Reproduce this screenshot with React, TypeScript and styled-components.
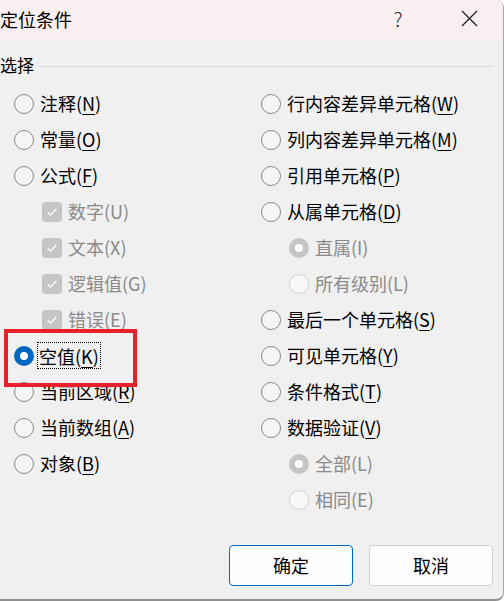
import React from 'react';
import styled, { createGlobalStyle, css } from 'styled-components';

const GlobalStyle = createGlobalStyle`
  html, body {
    margin: 0;
    padding: 0;
    background: #ffffff;
  }
  body {
    font-family: "Noto Sans CJK SC", "Noto Sans", sans-serif;
    color: #000;
  }
`;

const FONT = `"Noto Sans CJK SC", "Noto Sans", sans-serif`;

type Opt = {
  label: string;
  key?: string;
  kind: 'radio' | 'check';
  sub?: boolean;
  disabled?: boolean;
  checked?: boolean;
  focused?: boolean;
};

const leftItems: Opt[] = [
  { label: '注释', key: 'N', kind: 'radio' },
  { label: '常量', key: 'O', kind: 'radio' },
  { label: '公式', key: 'F', kind: 'radio' },
  { label: '数字(U)', kind: 'check', sub: true, disabled: true, checked: true },
  { label: '文本(X)', kind: 'check', sub: true, disabled: true, checked: true },
  { label: '逻辑值(G)', kind: 'check', sub: true, disabled: true, checked: true },
  { label: '错误(E)', kind: 'check', sub: true, disabled: true, checked: true },
  { label: '空值', key: 'K', kind: 'radio', checked: true, focused: true },
  { label: '当前区域', key: 'R', kind: 'radio' },
  { label: '当前数组', key: 'A', kind: 'radio' },
  { label: '对象', key: 'B', kind: 'radio' },
];

const rightItems: Opt[] = [
  { label: '行内容差异单元格', key: 'W', kind: 'radio' },
  { label: '列内容差异单元格', key: 'M', kind: 'radio' },
  { label: '引用单元格', key: 'P', kind: 'radio' },
  { label: '从属单元格', key: 'D', kind: 'radio' },
  { label: '直属(I)', kind: 'radio', sub: true, disabled: true, checked: true },
  { label: '所有级别(L)', kind: 'radio', sub: true, disabled: true },
  { label: '最后一个单元格', key: 'S', kind: 'radio' },
  { label: '可见单元格', key: 'Y', kind: 'radio' },
  { label: '条件格式', key: 'T', kind: 'radio' },
  { label: '数据验证', key: 'V', kind: 'radio' },
  { label: '全部(L)', kind: 'radio', sub: true, disabled: true, checked: true },
  { label: '相同(E)', kind: 'radio', sub: true, disabled: true },
];

const Window = styled.div`
  position: relative;
  width: 503px;
  height: 599px;
  background: #f0f0f0;
  border-right: 1px solid #a6a6a6;
  border-bottom: 2px solid #8e8e8e;
  border-radius: 0 8px 8px 0;
  overflow: hidden;
  display: flex;
  flex-direction: column;
  font-family: ${FONT};
`;

const TitleBar = styled.div`
  height: 41px;
  flex: none;
  background: #f9eff0;
  display: flex;
  align-items: center;
`;

const Title = styled.div`
  font-size: 18px;
  line-height: 24px;
  margin-top: -4px;
  flex: 1;
`;

const HelpMark = styled.div`
  font-size: 20px;
  line-height: 24px;
  font-weight: 300;
  margin-top: -4px;
  color: #222;
  width: 20px;
  text-align: center;
  margin-right: 52px;
`;

const CloseBtn = styled.div`
  width: 18px;
  height: 18px;
  margin-right: 25px;
  margin-top: -5px;
  display: flex;
  align-items: center;
  justify-content: center;
`;

const GroupHead = styled.div`
  margin-top: 13px;
  margin-bottom: 8px;
  height: 24px;
  display: flex;
  align-items: center;
  gap: 5px;
  padding-right: 10px;
`;

const GroupTitle = styled.span`
  font-size: 17px;
  line-height: 24px;
  margin-top: -2px;
`;

const GroupLine = styled.div`
  flex: 1;
  height: 1px;
  background: #d9d9d9;
`;

const Columns = styled.div`
  display: grid;
  grid-template-columns: 247px 1fr;
  padding-left: 14px;
`;

const Column = styled.div`
  display: flex;
  flex-direction: column;
`;

const Row = styled.div<{ $sub?: boolean }>`
  height: 36px;
  display: flex;
  align-items: center;
  gap: 6px;
  padding-left: ${(p) => (p.$sub ? 28 : 0)}px;
`;

const RadioDot = styled.span<{ $checked?: boolean; $disabled?: boolean }>`
  width: 20px;
  height: 20px;
  box-sizing: border-box;
  border-radius: 50%;
  flex: none;
  display: flex;
  align-items: center;
  justify-content: center;
  border: 1px solid #888888;
  background: #f6f6f6;
  ${(p) =>
    p.$disabled &&
    css`
      border-color: #d0d0d0;
      background: #f8f8f8;
    `}
  ${(p) =>
    p.$checked &&
    css`
      border: none;
      background: ${p.$disabled ? '#c5c5c5' : '#0067c0'};
      &::after {
        content: '';
        width: 8px;
        height: 8px;
        border-radius: 50%;
        background: #ffffff;
      }
    `}
`;

const CheckBox = styled.span`
  width: 20px;
  height: 20px;
  border-radius: 4px;
  background: #c5c5c5;
  flex: none;
  display: flex;
  align-items: center;
  justify-content: center;
`;

const Label = styled.span<{ $disabled?: boolean; $focused?: boolean }>`
  font-size: 18px;
  line-height: 24px;
  margin-top: -2px;
  color: ${(p) => (p.$disabled ? '#8a8a8a' : '#000')};
  white-space: nowrap;
  ${(p) =>
    p.$focused &&
    css`
      outline: 1px dotted #000;
      outline-offset: 0;
      padding: 1px 1px 0 0;
      margin-left: -2px;
      padding-left: 1px;
    `}
`;

const AccessKey = styled.span`
  text-decoration: underline;
  text-underline-offset: 3px;
  text-decoration-thickness: 1px;
`;

const Footer = styled.div`
  margin-top: auto;
  display: flex;
  justify-content: flex-end;
  gap: 16px;
  padding: 0 10px 13px 0;
`;

const Button = styled.button<{ $primary?: boolean }>`
  width: 124px;
  height: 41px;
  box-sizing: border-box;
  border-radius: 4px;
  background: #fdfdfd;
  border: 1px solid ${(p) => (p.$primary ? '#0067c0' : '#d0d0d0')};
  font-family: ${FONT};
  font-size: 18px;
  line-height: 24px;
  color: #000;
  padding: 0 0 2px;
`;

const Highlight = styled.div`
  position: absolute;
  left: 4px;
  top: 329px;
  width: 133px;
  height: 58px;
  box-sizing: border-box;
  border: 4px solid #e8202a;
  pointer-events: none;
`;

const Check = () => (
  <svg width="12" height="10" viewBox="0 0 12 10">
    <path d="M1.5 5.2 L4.5 8 L10.5 1.8" fill="none" stroke="#fff" strokeWidth="1.3" />
  </svg>
);

const Item: React.FC<{ o: Opt }> = ({ o }) => (
  <Row $sub={o.sub}>
    {o.kind === 'radio' ? (
      <RadioDot $checked={o.checked} $disabled={o.disabled} />
    ) : (
      <CheckBox>
        <Check />
      </CheckBox>
    )}
    <Label $disabled={o.disabled} $focused={o.focused}>
      {o.label}
      {o.key && (
        <>
          (<AccessKey>{o.key}</AccessKey>)
        </>
      )}
    </Label>
  </Row>
);

const App: React.FC = () => (
  <>
    <GlobalStyle />
    <Window>
      <TitleBar>
        <Title>定位条件</Title>
        <HelpMark>?</HelpMark>
        <CloseBtn>
          <svg width="17" height="17" viewBox="0 0 17 17">
            <path d="M1 1 L16 16 M16 1 L1 16" stroke="#1a1a1a" strokeWidth="1.2" />
          </svg>
        </CloseBtn>
      </TitleBar>
      <GroupHead>
        <GroupTitle>选择</GroupTitle>
        <GroupLine />
      </GroupHead>
      <Columns>
        <Column>
          {leftItems.map((o) => (
            <Item key={o.label} o={o} />
          ))}
        </Column>
        <Column>
          {rightItems.map((o) => (
            <Item key={o.label} o={o} />
          ))}
        </Column>
      </Columns>
      <Footer>
        <Button $primary>确定</Button>
        <Button>取消</Button>
      </Footer>
      <Highlight />
    </Window>
  </>
);

export default App;
